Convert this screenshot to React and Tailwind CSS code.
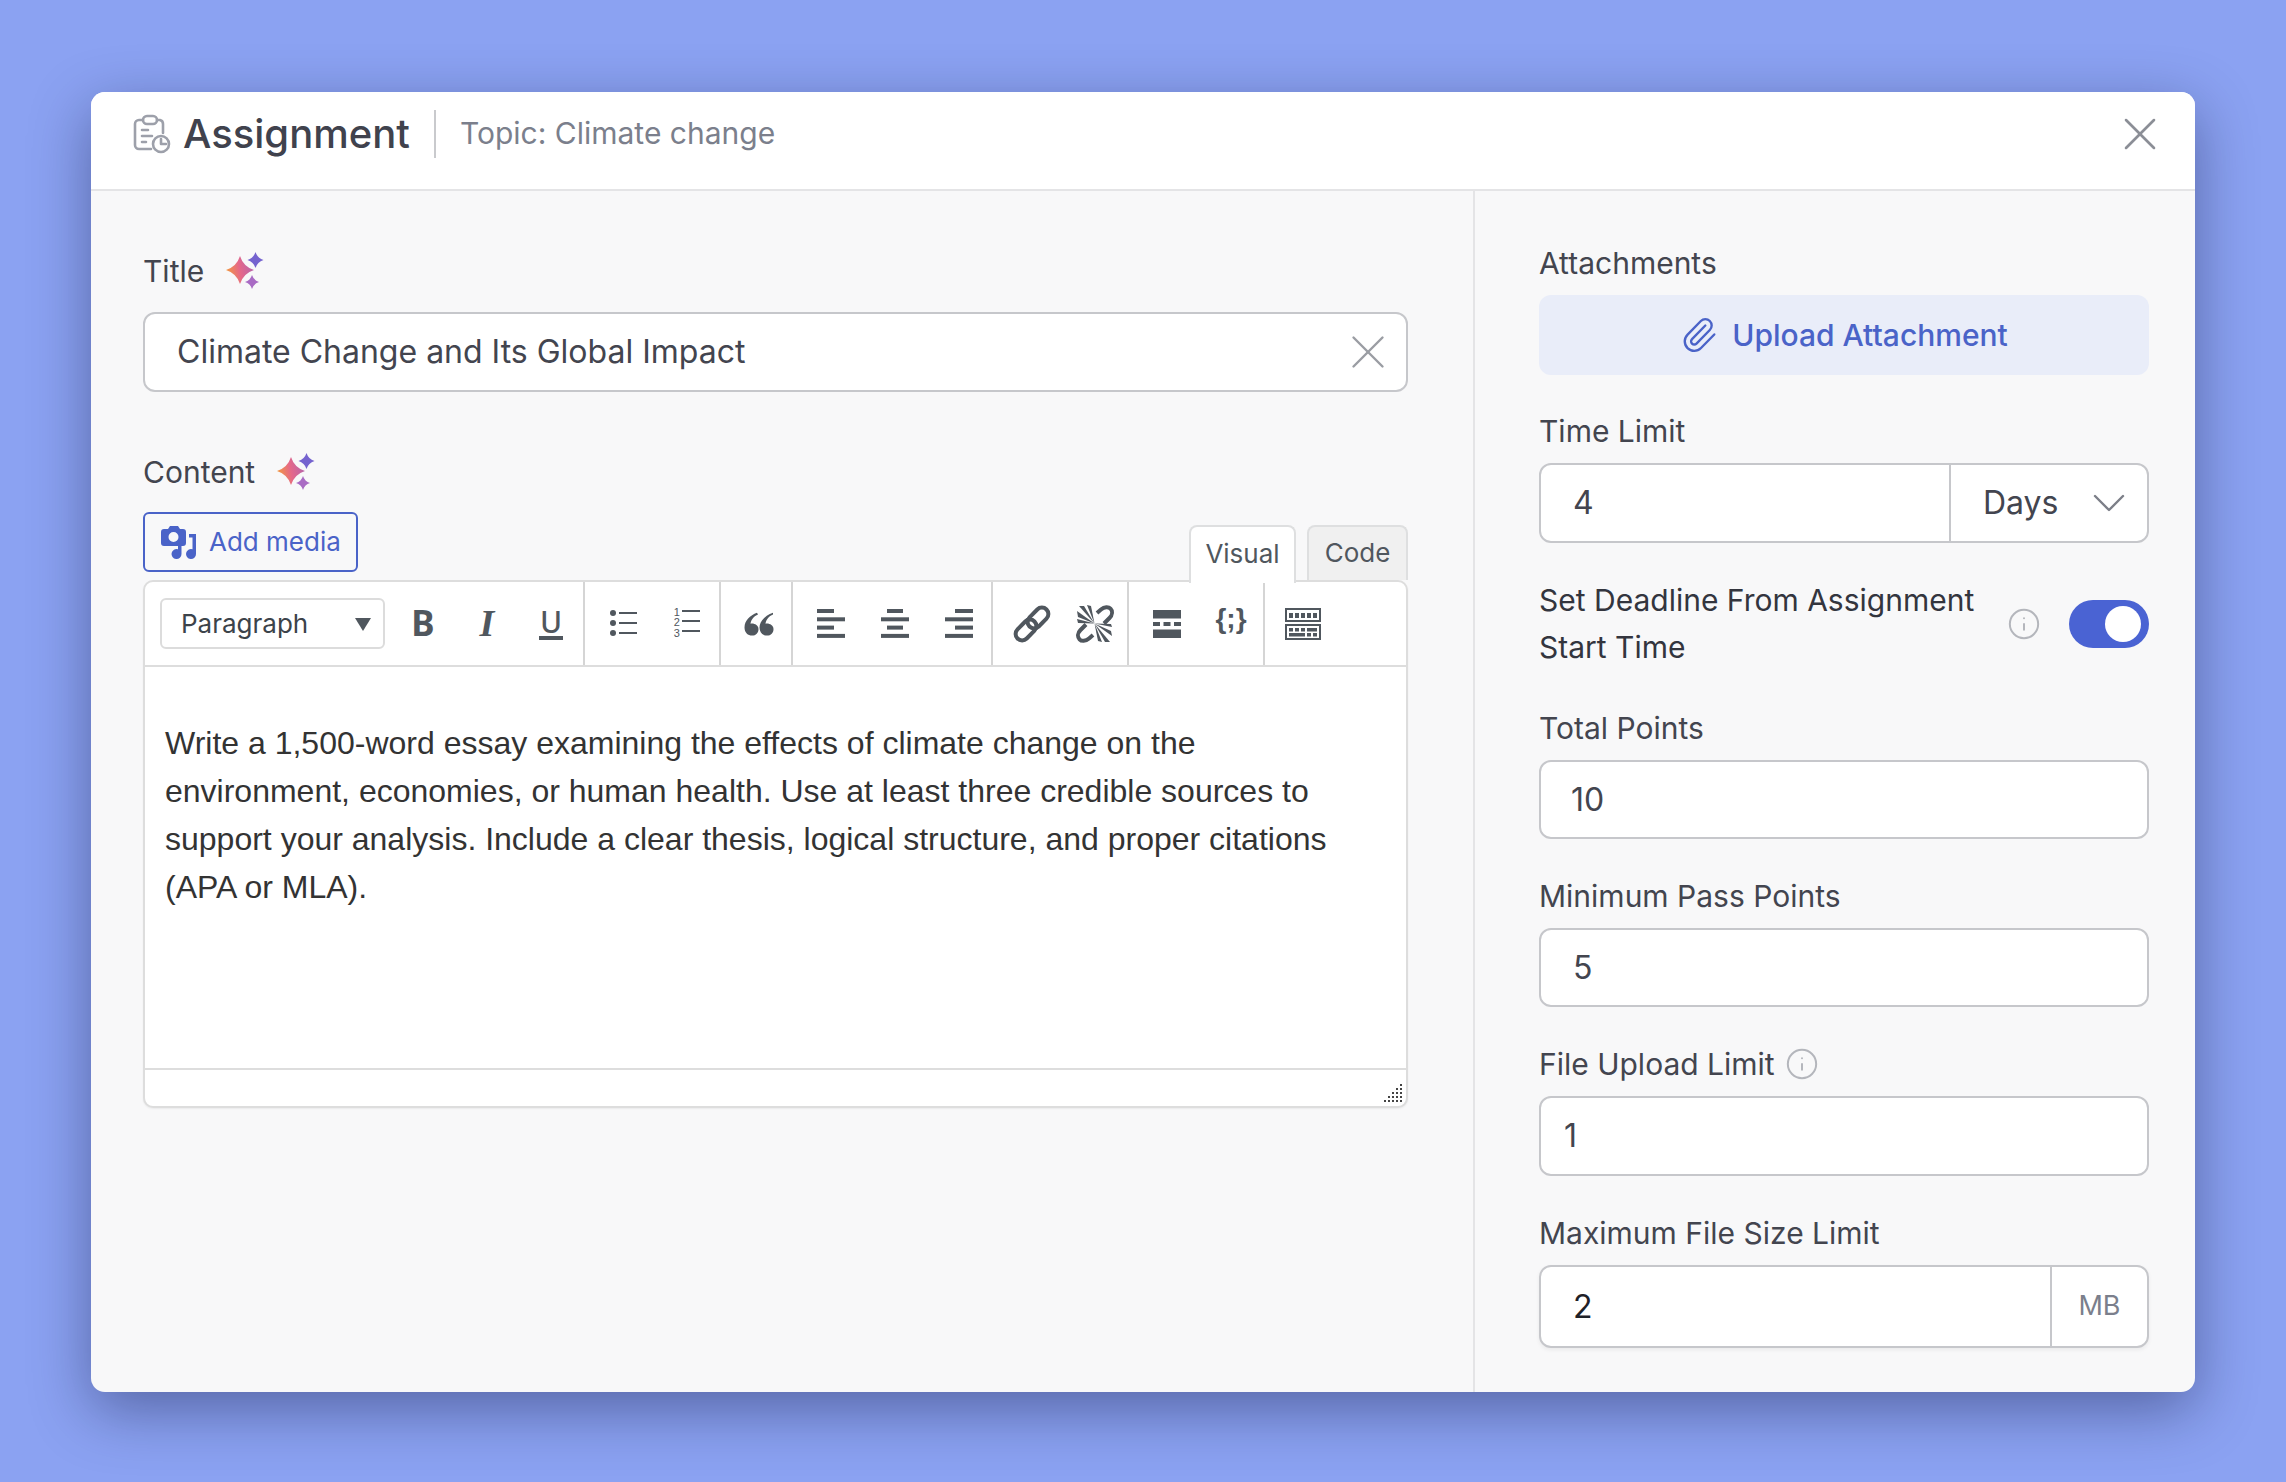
import React from "react";
import { X, ChevronDown, Info, Paperclip } from "lucide-react";

const inter = "font-['Inter',sans-serif]";

function star(cx, cy, r) {
  const k = r * 0.24;
  return `M${cx} ${cy - r} Q${cx + k} ${cy - k} ${cx + r} ${cy} Q${cx + k} ${cy + k} ${cx} ${cy + r} Q${cx - k} ${cy + k} ${cx - r} ${cy} Q${cx - k} ${cy - k} ${cx} ${cy - r}Z`;
}

function Sparkles({ id }) {
  return (
    <svg width="38" height="38" viewBox="0 0 38 38" className="shrink-0">
      <defs>
        <linearGradient id={id} x1="0" y1="0.6" x2="1" y2="0.4">
          <stop offset="0" stopColor="#f39a3c" />
          <stop offset="0.5" stopColor="#e5688a" />
          <stop offset="1" stopColor="#b565ac" />
        </linearGradient>
      </defs>
      <path fill={`url(#${id})`} d={star(14, 18, 14)} />
      <path fill="#7563cf" d={star(29.5, 8, 8)} />
      <path fill="#a96bc4" d={star(26, 30, 7)} />
    </svg>
  );
}

function ClipboardClock() {
  return (
    <svg width="38" height="40" viewBox="0 0 38 40" fill="none" stroke="#9da0aa" strokeWidth="2.6" strokeLinecap="round" strokeLinejoin="round">
      <path d="M10 6 H6 A4 4 0 0 0 2 10 V31 A4 4 0 0 0 6 35 H18" />
      <path d="M24 6 H27 A4 4 0 0 1 30 10 V19" />
      <rect x="10" y="2" width="14" height="8" rx="4" />
      <path d="M9 16 H15 M9 22 H19 M9 28 H13" />
      <circle cx="28" cy="30" r="8" />
      <path d="M28 25 V30 H33" />
    </svg>
  );
}

function MediaIcon() {
  return (
    <svg width="36" height="36" viewBox="0 0 36 36" fill="#4a63c8">
      <path fillRule="evenodd" d="M9 2 H17 L19 5 H22 A3 3 0 0 1 25 8 V19 A3 3 0 0 1 22 22 H3 A3 3 0 0 1 0 19 V8 A3 3 0 0 1 3 5 H7 Z M12.5 8 A5 5 0 1 0 12.5 18 A5 5 0 0 0 12.5 8 Z" />
      <path d="M28 10 H35 V30 A5 5 0 1 1 31.5 25.3 V13.5 H28 Z" />
      <path d="M17 20 H20.5 V30 A5 5 0 1 1 17 25.3 Z" />
    </svg>
  );
}

const ic = "#50575e";

function Bars({ kind }) {
  const rows = kind === "left"
    ? [[0, 17], [0, 28], [0, 17], [0, 28]]
    : kind === "center"
    ? [[6, 16], [0, 28], [6, 16], [0, 28]]
    : [[10, 18], [0, 28], [10, 18], [0, 28]];
  return (
    <svg width="28" height="29" viewBox="0 0 28 29" fill={ic}>
      {rows.map((r, i) => (
        <rect key={i} x={r[0]} y={i * 8.3} width={r[1]} height="4" />
      ))}
    </svg>
  );
}

function BulletList() {
  return (
    <svg width="30" height="30" viewBox="0 0 30 30" fill={ic}>
      {[4, 14, 24].map((y) => (
        <g key={y}>
          <circle cx="3" cy={y} r="3" />
          <rect x="9" y={y - 1} width="18" height="2" />
        </g>
      ))}
    </svg>
  );
}

function NumList() {
  return (
    <div className="relative w-[30px] h-[34px] font-['Liberation_Sans',sans-serif] text-[#50575e] text-[11px] leading-[10.5px]">
      <div className="w-[8px] text-center">1<br />2<br />3</div>
      <div className="absolute left-[9px] top-[3px] w-[18px] h-[2px] bg-[#50575e]" />
      <div className="absolute left-[9px] top-[13px] w-[18px] h-[2px] bg-[#50575e]" />
      <div className="absolute left-[9px] top-[23px] w-[18px] h-[2px] bg-[#50575e]" />
    </div>
  );
}

function Quote() {
  return (
    <svg width="30" height="24" viewBox="0 0 30 28" preserveAspectRatio="none" fill={ic}>
      <path d="M13 1 C6 4 0.5 10 0.5 18 C0.5 24 4 27.5 8 27.5 C12 27.5 14.5 24 14.5 20 C14.5 16 11 13.5 8 13.5 C7.5 13.5 7 13.5 6.5 13.7 C7 9 10 5 14 3 Z" />
      <path d="M29 1 C22 4 15.5 10 15.5 18 C15.5 24 19 27.5 23 27.5 C27 27.5 29.5 24 29.5 20 C29.5 16 26 13.5 23 13.5 C22.5 13.5 22 13.5 21.5 13.7 C22 9 25 5 29 3 Z" />
    </svg>
  );
}

function LinkIcon() {
  return (
    <svg width="38" height="38" viewBox="0 0 38 38" fill="none" stroke={ic} strokeWidth="4">
      <rect x="-12" y="-6.5" width="24" height="13" rx="6.5" transform="translate(13 25) rotate(-45)" />
      <rect x="-12" y="-6.5" width="24" height="13" rx="6.5" transform="translate(25 13) rotate(-45)" />
    </svg>
  );
}

function UnlinkIcon() {
  return (
    <svg width="38" height="38" viewBox="0 0 38 38">
      <g fill="none" stroke={ic} strokeWidth="4">
        <path d="M21 8 L25 4.5 C28.5 1.5 32.5 1.5 34.5 3.7 C36.7 6 36.5 10 33.5 13 L28 18.5" />
        <path d="M17 30 L13 33.5 C9.5 36.5 5.5 36.5 3.5 34.3 C1.3 32 1.5 28 4.5 25 L10 19.5" />
      </g>
      <g fill={ic}>
        <path d="M18.5 18.5 L1 6 L2 12 Z" />
        <path d="M18.5 18.5 L3 1 L8 1 Z" />
        <path d="M18.5 18.5 L11 0 L15 1 Z" />
        <path d="M18.5 18.5 L1 14 L2 18 Z" />
        <path d="M18.5 18.5 L36 31 L35 26 Z" />
        <path d="M18.5 18.5 L34 37 L29 37 Z" />
        <path d="M18.5 18.5 L26 37 L22 36 Z" />
        <path d="M18.5 18.5 L36 22 L35 19 Z" />
      </g>
    </svg>
  );
}

function HrIcon() {
  return (
    <svg width="28" height="28" viewBox="0 0 28 28" fill={ic}>
      <rect x="0" y="0" width="28" height="8.5" />
      <rect x="0" y="12" width="7" height="4" />
      <rect x="10.5" y="12" width="7" height="4" />
      <rect x="21" y="12" width="7" height="4" />
      <rect x="0" y="19.5" width="28" height="8.5" />
    </svg>
  );
}

function Keyboard() {
  return (
    <svg width="36" height="32" viewBox="0 0 36 32" fill={ic}>
      <path fillRule="evenodd" d="M0 0 H36 V14 H0 Z M2 2 V12 H34 V2 Z" />
      <path fillRule="evenodd" d="M0 16 H36 V32 H0 Z M2 18 V30 H34 V18 Z" />
      {[4, 10, 16, 22, 28].map((x) => <rect key={x} x={x} y="5" width="4" height="5" />)}
      {[4, 10, 16].map((x) => <rect key={x} x={x} y="20" width="4" height="3.5" />)}
      <rect x="22" y="20" width="10" height="3.5" />
      <rect x="4" y="25" width="16" height="3.5" />
      <rect x="22" y="25" width="4" height="3.5" />
      <rect x="28" y="25" width="4" height="3.5" />
    </svg>
  );
}

function Btn({ children }) {
  return <div className="w-[64px] h-full flex items-center justify-center">{children}</div>;
}

function Group({ className, children }) {
  return <div className={`h-full flex items-center border-r-[2px] border-[#d5d5d5] ${className}`}>{children}</div>;
}

function Grip() {
  const dots = [];
  for (let r = 0; r < 5; r++) {
    for (let c = 4 - r; c < 5; c++) dots.push([c * 4, r * 4]);
  }
  return (
    <svg width="18" height="18" viewBox="0 0 18 18" fill="#444">
      {dots.map(([x, y], i) => <rect key={i} x={x} y={y} width="2" height="2" />)}
    </svg>
  );
}

function Label({ children }) {
  return <div className="h-[44px] mb-[10px] flex items-center text-[30px] text-[#43454f]">{children}</div>;
}

function Box({ children, pad = "pl-[32px]", h = "h-[79px]" }) {
  return (
    <div className={`${h} w-full bg-white border-[2.5px] border-[#c6c7cb] rounded-[12px] flex items-center ${pad} text-[32px] text-[#43454f]`}>
      {children}
    </div>
  );
}

function Toggle() {
  return (
    <div className="w-[80px] h-[48px] rounded-full bg-[#4a63d3] flex items-center justify-end pr-[8px] shrink-0">
      <div className="w-[36px] h-[36px] rounded-full bg-white" />
    </div>
  );
}

export default function App() {
  return (
    <div className={`w-full h-[1482px] bg-[#8ba2f2] pt-[92px] pl-[91px] overflow-hidden ${inter}`}>
      <div className="w-[2104px] h-[1300px] rounded-[14px] bg-[#f8f8f9] overflow-hidden flex flex-col shadow-[0_18px_60px_rgba(15,20,60,0.42)]">
        <header className="h-[99px] shrink-0 bg-white border-b-[2px] border-[#e4e4e6] flex items-center pl-[42px] pr-[27px] pb-[14px]">
          <ClipboardClock />
          <h1 className="ml-[12px] text-[40px] font-medium text-[#40424d]">Assignment</h1>
          <div className="ml-[24px] w-[2px] h-[48px] bg-[#c9cacd]" />
          <div className="ml-[24px] text-[30px] text-[#7b7f8c]">Topic: Climate change</div>
          <X className="ml-auto" size={56} strokeWidth={1.1} color="#8b8e96" />
        </header>

        <div className="flex-1 flex min-h-0">
          <main className="w-[1384px] shrink-0 border-r-[2px] border-[#e4e4e6] pl-[52px] pr-[65px] pt-[58px]">
            <div className="h-[44px] mb-[19px] flex items-center gap-[22px] text-[30px] text-[#43454f]">
              <span>Title</span>
              <Sparkles id="sp1" />
            </div>
            <div className="h-[80px] bg-white border-[2.5px] border-[#c6c7cb] rounded-[12px] flex items-center pl-[32px] pr-[9px] text-[32px] text-[#43454f]">
              <span>Climate Change and Its Global Impact</span>
              <X className="ml-auto" size={58} strokeWidth={1} color="#9a9da3" />
            </div>

            <div className="h-[44px] mt-[58px] mb-[18px] flex items-center gap-[22px] text-[30px] text-[#43454f]">
              <span>Content</span>
              <Sparkles id="sp2" />
            </div>

            <div className="flex items-end justify-between">
              <div className="mb-[8px] h-[60px] w-[215px] border-[2.5px] border-[#4a63c8] rounded-[6px] flex items-center pl-[16px] gap-[12px] text-[#4a63c8] text-[26px]">
                <MediaIcon />
                <span className="whitespace-nowrap pb-[2px]">Add media</span>
              </div>
              <div className="flex items-start gap-[11px] text-[26px] text-[#50575e] relative z-10 -mb-[3px]">
                <div className="w-[107px] h-[58px] pb-[4px] border-[2.5px] border-b-0 border-[#dedfe0] rounded-t-[8px] flex items-center justify-center bg-white">Visual</div>
                <div className="w-[101px] h-[55px] pb-[3px] bg-[#f0f0f0] border-[2.5px] border-b-0 border-[#dedfe0] rounded-t-[8px] flex items-center justify-center">Code</div>
              </div>
            </div>

            <div className="h-[528px] bg-white border-[2.5px] border-[#dddddd] rounded-[10px] overflow-hidden flex flex-col shadow-[0_1px_2px_rgba(0,0,0,0.06)]">
              <div className="h-[85px] shrink-0 border-b-[2.5px] border-[#dddddd] flex items-center">
                <Group className="pl-[15px] w-[440px]">
                  <div className="w-[225px] h-[51px] mr-[6px] shrink-0 border-[2px] border-[#dcdcdc] rounded-[6px] flex items-center pl-[19px] pr-[12px] text-[26px] text-[#3c434a]">
                    <span>Paragraph</span>
                    <svg className="ml-auto" width="16" height="14" viewBox="0 0 16 14" fill={ic}><path d="M0 1 H16 L8 14 Z" /></svg>
                  </div>
                  <Btn><span className="font-['Noto_Sans',sans-serif] font-bold text-[35px] text-[#50575e]">B</span></Btn>
                  <Btn><span className="font-['Liberation_Serif',serif] font-bold italic text-[38px] text-[#50575e]">I</span></Btn>
                  <Btn><span className="font-['Noto_Sans',sans-serif] font-medium text-[30px] text-[#50575e] border-b-[4px] border-[#50575e] leading-[28px] px-[1px]">U</span></Btn>
                </Group>
                <Group className="w-[136px] pl-[9px]">
                  <Btn><BulletList /></Btn>
                  <Btn><NumList /></Btn>
                </Group>
                <Group className="w-[72px] pl-[6px]">
                  <Btn><Quote /></Btn>
                </Group>
                <Group className="w-[200px] pl-[6px]">
                  <Btn><Bars kind="left" /></Btn>
                  <Btn><Bars kind="center" /></Btn>
                  <Btn><Bars kind="right" /></Btn>
                </Group>
                <Group className="w-[136px] pl-[7px]">
                  <Btn><LinkIcon /></Btn>
                  <Btn><UnlinkIcon /></Btn>
                </Group>
                <Group className="w-[136px] pl-[6px]">
                  <Btn><HrIcon /></Btn>
                  <Btn><span className="font-['Liberation_Sans',sans-serif] font-bold text-[28px] text-[#50575e] -mt-[10px]">{"{;}"}</span></Btn>
                </Group>
                <div className="pl-[6px] h-full flex items-center"><Btn><Keyboard /></Btn></div>
              </div>
              <div className="flex-1 pt-[52px] pl-[20px] pr-[40px] font-['Liberation_Sans',sans-serif] text-[32px] leading-[48px] text-[#333333]">
                Write a 1,500-word essay examining the effects of climate change on the environment, economies, or human health. Use at least three credible sources to support your analysis. Include a clear thesis, logical structure, and proper citations (APA or MLA).
              </div>
              <div className="h-[38px] shrink-0 border-t-[2.5px] border-[#dddddd] flex items-end justify-end pr-[4px] pb-[4px]">
                <Grip />
              </div>
            </div>
          </main>

          <aside className="flex-1 pl-[64px] pr-[46px] pt-[50px]">
            <Label>Attachments</Label>
            <div className="h-[80px] bg-[#e9edf9] rounded-[12px] flex items-center justify-center gap-[14px] text-[30px] font-medium text-[#4a63c8]">
              <Paperclip size={38} strokeWidth={1.5} />
              <span>Upload Attachment</span>
            </div>

            <div className="mt-[34px]"><Label>Time Limit</Label></div>
            <div className="h-[80px] bg-white border-[2.5px] border-[#c6c7cb] rounded-[12px] flex items-stretch text-[32px] text-[#43454f]">
              <div className="w-[410px] border-r-[2px] border-[#c6c7cb] flex items-center pl-[32px]">4</div>
              <div className="flex-1 flex items-center pl-[32px] pr-[10px]">
                <span>Days</span>
                <ChevronDown className="ml-auto" size={56} strokeWidth={1.05} color="#7c7f88" />
              </div>
            </div>

            <div className="mt-[33px] h-[96px] flex items-center text-[30px] text-[#33353e] leading-[47.5px]">
              <div className="w-[460px]">Set Deadline From Assignment Start Time</div>
              <Info className="ml-[8px]" size={34} strokeWidth={1.4} color="#b4b6bc" />
              <div className="ml-auto"><Toggle /></div>
            </div>

            <div className="mt-[34px]"><Label>Total Points</Label></div>
            <Box pad="pl-[30px]">10</Box>

            <div className="mt-[35px]"><Label>Minimum Pass Points</Label></div>
            <Box>5</Box>

            <div className="mt-[35px]"><Label><span>File Upload Limit</span><Info className="ml-[10px]" size={34} strokeWidth={1.4} color="#b4b6bc" /></Label></div>
            <Box pad="pl-[23px]" h="h-[80px]">1</Box>

            <div className="mt-[35px]"><Label>Maximum File Size Limit</Label></div>
            <div className="h-[83px] bg-white border-[2.5px] border-[#c6c7cb] rounded-[12px] flex items-stretch text-[32px] text-[#1f2128] shadow-[0_2px_4px_rgba(0,0,0,0.06)]">
              <div className="w-[511px] border-r-[2px] border-[#c6c7cb] flex items-center pl-[32px]">2</div>
              <div className="flex-1 flex items-center justify-center text-[27px] text-[#7b7f8c]">MB</div>
            </div>
          </aside>
        </div>
      </div>
    </div>
  );
}
